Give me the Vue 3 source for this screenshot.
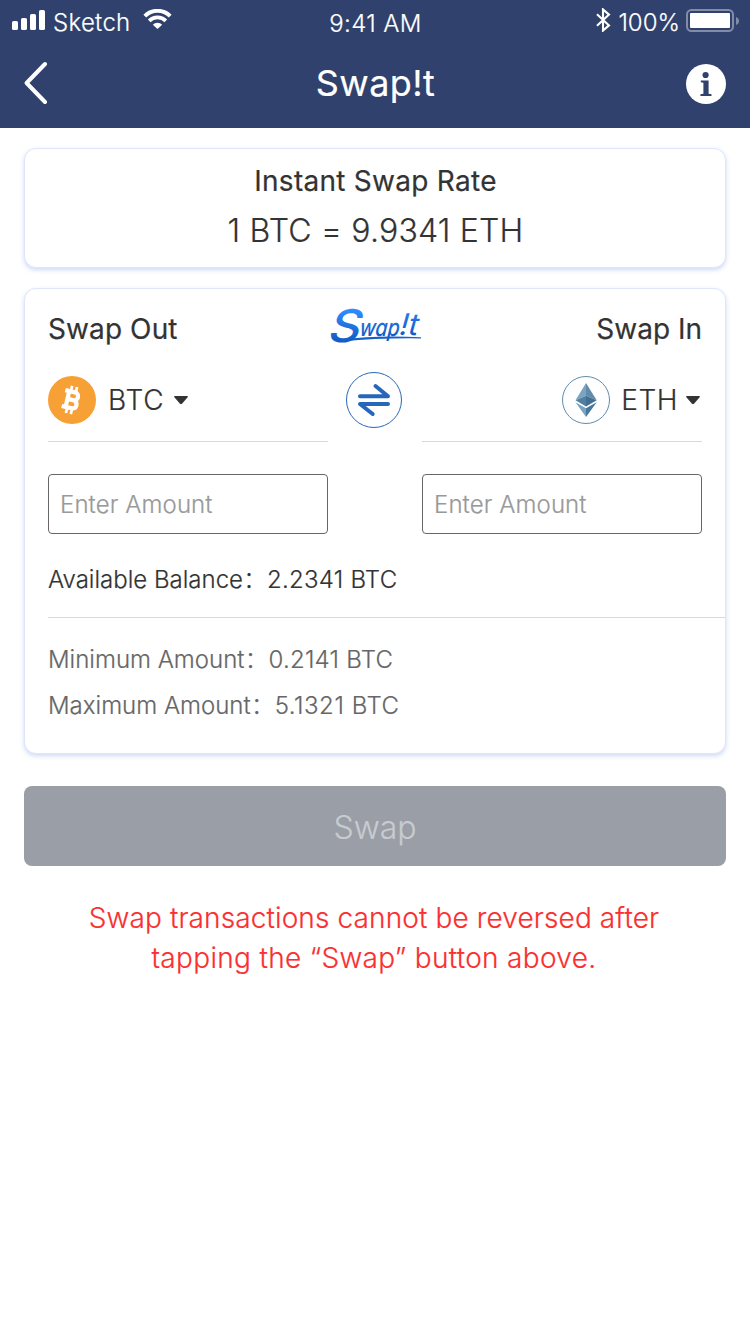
<script setup>
import { ref } from 'vue'

const outAmount = ref('')
const inAmount = ref('')
const limits = [
  { label: 'Minimum Amount', value: '0.2141 BTC', cls: 'min' },
  { label: 'Maximum Amount', value: '5.1321 BTC', cls: 'max' },
]
</script>

<template>
  <div class="screen">
    <header class="header">
      <div class="status">
        <div class="status-left">
          <svg class="signal" width="34" height="21" viewBox="0 0 34 21" fill="#fff">
            <rect x="0" y="11" width="6" height="9" rx="1.6" />
            <rect x="9" y="8" width="6" height="12" rx="1.6" />
            <rect x="18" y="4" width="6" height="16" rx="1.6" />
            <rect x="27" y="0" width="6" height="20" rx="1.6" />
          </svg>
          <span class="carrier">Sketch</span>
          <svg class="wifi" width="29" height="21" viewBox="0 0 30 22" fill="none" stroke="#fff">
            <path d="M1.7 7.4a18.8 18.8 0 0 1 26.6 0" stroke-width="4.2" />
            <path d="M6.3 12.4a12.2 12.2 0 0 1 17.4 0" stroke-width="3.9" />
            <path d="M15 21l-4.9-4.6a6.9 6.9 0 0 1 9.8 0z" fill="#fff" stroke="none" />
          </svg>
        </div>
        <span class="clock">9:41 AM</span>
        <div class="status-right">
          <svg class="bluetooth" width="15" height="24" viewBox="0 0 15 24" fill="none" stroke="#fff" stroke-width="2.1">
            <path d="M1 6.2l12 11.2-6 5.2V1.4l6 5.2L1 17.8" />
          </svg>
          <span class="percent">100%</span>
          <svg class="battery" width="53" height="24" viewBox="0 0 53 24">
            <rect x="1" y="1" width="46" height="21" rx="4.5" fill="none" stroke="#828ca6" stroke-width="2" />
            <rect x="4" y="4" width="40" height="15" rx="1" fill="#fff" />
            <path d="M50 8q3 1.2 3 4t-3 4z" fill="#828ca6" />
          </svg>
        </div>
      </div>
      <nav class="nav">
        <svg width="26" height="44" viewBox="0 0 26 44" fill="none" stroke="#fff" stroke-width="4" stroke-linecap="round" stroke-linejoin="round">
          <path d="M21 3L2.6 22 21 41" />
        </svg>
        <h1 class="title">Swap!t</h1>
        <svg class="info" width="40" height="40" viewBox="0 0 40 40">
          <circle cx="20" cy="20" r="20" fill="#fff" />
          <circle cx="19.6" cy="11" r="3.1" fill="#2f416c" />
          <path d="M14.8 16.5h7.8v13.3l2.9.5V32H14.4v-1.7l3-.5V18.7l-2.6-.5z" fill="#2f416c" />
        </svg>
      </nav>
    </header>

    <main class="content">
      <section class="card rate">
        <h2 class="rate-title">Instant Swap Rate</h2>
        <p class="rate-value">1 BTC = 9.9341 ETH</p>
      </section>

      <section class="card swap">
        <div class="columns">
          <div class="side">
            <h2 class="side-title">Swap Out</h2>
            <div class="coin">
              <svg width="48" height="48" viewBox="0 0 48 48">
                <circle cx="24" cy="24" r="24" fill="#f7a036" />
                <g transform="rotate(13 24 24)" fill="none" stroke="#fff">
                  <path d="M19.3 15.5v17M15.3 15.9h9.9a4 4 0 0 1 0 8h-5.5M19.5 23.9h6.4a4.2 4.2 0 0 1 0 8.3H15.3" stroke-width="4.2" />
                  <path d="M21 10.2v5M26 10.2v5M21 33v5M26 33v5" stroke-width="2.7" />
                </g>
              </svg>
              <span class="btc">BTC</span>
              <svg class="caret" width="14" height="9" viewBox="0 0 14 9"><path d="M1 0h12q1.6.3.4 1.6L8 7.7q-1 .9-2 0L.6 1.6Q-.6.3 1 0z" fill="#333" /></svg>
            </div>
            <input v-model="outAmount" class="amount" placeholder="Enter Amount" />
          </div>

          <div class="middle">
            <svg class="logo" width="94" height="46" viewBox="0 0 94 46">
              <defs>
                <linearGradient id="ink" x1="0" y1="-32" x2="0" y2="4" gradientUnits="userSpaceOnUse">
                  <stop offset="0" stop-color="#2f8dff" />
                  <stop offset="1" stop-color="#0d55bd" />
                </linearGradient>
              </defs>
              <text class="logo-s" transform="translate(0 33.5) skewX(-8)" textLength="32" lengthAdjust="spacingAndGlyphs">S</text>
              <text class="logo-w" transform="translate(31 28) skewX(-6)" textLength="40" lengthAdjust="spacingAndGlyphs">wap</text>
              <text class="logo-t" transform="translate(71 26.5) skewX(-6)" textLength="19" lengthAdjust="spacingAndGlyphs">!t</text>
              <path d="M14 31.5Q48 27 93 29.2V30.4Q52 29.8 14 33.5z" fill="#1560cb" />
            </svg>
            <svg class="exchange" width="56" height="56" viewBox="0 0 56 56" fill="none" stroke="#2767ba">
              <circle cx="28" cy="28" r="27.5" />
              <path d="M14 24.2h28L29.5 14M42 32H14l12.7 10" stroke-width="4" stroke-linecap="round" stroke-linejoin="round" />
            </svg>
          </div>

          <div class="side right">
            <h2 class="side-title">Swap In</h2>
            <div class="coin">
              <svg width="48" height="48" viewBox="0 0 48 48">
                <circle cx="24" cy="24" r="23.5" fill="#fff" stroke="#5f8cae" />
                <path d="M24 7L13.5 24.3 24 19.7z" fill="#7ba4c2" />
                <path d="M24 7l10.7 17.3L24 19.7z" fill="#628bab" />
                <path d="M24 19.7l-10.5 4.6L24 30.4z" fill="#517fa2" />
                <path d="M24 19.7l10.7 4.6L24 30.4z" fill="#426f94" />
                <path d="M13.5 26.3L24 41v-8.7z" fill="#7ba4c2" />
                <path d="M34.7 26.3L24 41v-8.7z" fill="#47779b" />
              </svg>
              <span class="eth">ETH</span>
              <svg class="caret" width="14" height="9" viewBox="0 0 14 9"><path d="M1 0h12q1.6.3.4 1.6L8 7.7q-1 .9-2 0L.6 1.6Q-.6.3 1 0z" fill="#333" /></svg>
            </div>
            <input v-model="inAmount" class="amount" placeholder="Enter Amount" />
          </div>
        </div>

        <p class="balance">Available Balance：<span>2.2341 BTC</span></p>
        <div class="limits">
          <p v-for="l in limits" :key="l.label">{{ l.label }}：<span :class="l.cls">{{ l.value }}</span></p>
        </div>
      </section>

      <button class="submit" disabled>Swap</button>
      <p class="warning">Swap transactions cannot be reversed after<br /><span>tapping the “Swap” button above.</span></p>
    </main>
  </div>
</template>

<style>
body { margin: 0; background: #fff; }
</style>

<style scoped>
* { box-sizing: border-box; margin: 0; }
svg { display: block; flex: none; }
.screen {
  width: 750px;
  height: 1334px;
  background: #fff;
  color: #333;
  font-family: Inter, "Noto Sans CJK SC", sans-serif;
  font-weight: 300;
  -webkit-text-stroke: 0.2px currentColor;
}
.header { height: 128px; background: #2f416c; color: #fff; }
.status {
  display: grid;
  grid-template-columns: 1fr auto 1fr;
  height: 40px;
  padding: 0 11px 0 12px;
  font-size: 24px;
  line-height: 46px;
}
.status-left, .status-right { display: flex; align-items: flex-start; }
.status-right { justify-content: flex-end; }
.signal { margin-top: 10px; }
.carrier { margin-left: 7px; letter-spacing: 0.3px; }
.wifi { margin: 9px 0 0 12px; }
.clock { line-height: 47px; letter-spacing: 0.4px; }
.bluetooth { margin-top: 8px; }
.percent { margin-left: 7px; letter-spacing: 0; }
.battery { margin: 9px 0 0 6px; }
.nav {
  display: flex;
  align-items: center;
  justify-content: space-between;
  height: 86px;
  padding: 0 24px;
}
.info { margin-top: 2px; }
.title { margin-left: 15px; font-size: 36px; font-weight: 400; line-height: 50px; letter-spacing: 0.4px; }
.content { padding: 20px 24px; }
.card {
  border: 1px solid #dfe6fb;
  border-radius: 12px;
  background: #fff;
  box-shadow: 0 2px 4px rgba(160, 182, 238, 0.5);
}
.rate { height: 120px; padding-top: 12px; text-align: center; }
.rate-title { padding-left: 1px; font-size: 28px; font-weight: 400; line-height: 40px; letter-spacing: 0.27px; }
.rate-value { padding-left: 1px; font-size: 32px; line-height: 60px; letter-spacing: 0.2px; }
.swap { height: 466px; margin-top: 20px; padding: 19px 0 0 23px; }
.columns { display: flex; justify-content: space-between; padding-right: 23px; }
.side { width: 280px; }
.side-title { height: 40px; font-size: 28px; font-weight: 400; line-height: 42px; letter-spacing: 0.1px; }
.right .side-title { letter-spacing: 0; text-align: right; }
.coin {
  display: flex;
  align-items: center;
  height: 94px;
  padding-top: 10px;
  border-bottom: 1px solid #d9d9dc;
  font-size: 28px;
}
.right .coin { justify-content: flex-end; }
.btc, .eth { padding-top: 1px; }
.btc { margin-left: 12px; letter-spacing: 0.9px; }
.eth { margin-left: 11px; letter-spacing: 0.5px; }
.caret { margin: 1px 0 0 9px; }
.right .caret { margin: 1px 2px 0 8px; }
.amount {
  display: block;
  width: 280px;
  height: 60px;
  margin-top: 32px;
  padding: 1px 11px 0;
  border: 1px solid #666;
  border-radius: 4px;
  background: #fff;
  font: inherit;
  font-size: 24px;
  letter-spacing: 0.1px;
  outline: none;
}
.amount::placeholder { color: #999; opacity: 1; }
.middle { display: flex; flex-direction: column; align-items: center; width: 94px; }
.logo { overflow: visible; font-family: Inter, sans-serif; font-style: italic; fill: url(#ink); -webkit-text-stroke: 0; }
.logo-s { font-size: 45px; font-weight: 500; }
.logo-w { font-size: 24px; font-weight: 500; }
.logo-t { font-size: 30px; font-weight: 400; }
.exchange { margin-top: 18px; margin-right: 2px; }
.balance {
  height: 84px;
  padding-top: 22px;
  border-bottom: 1px solid #d9d9dc;
  font-size: 24px;
  line-height: 48px;
}
.limits { padding-top: 19px; color: #666; font-size: 24px; line-height: 46px; }
.balance span { letter-spacing: 0.25px; }
.min { letter-spacing: 0.25px; }
.max { letter-spacing: 0.55px; }
.submit {
  display: block;
  width: 702px;
  height: 80px;
  margin-top: 32px;
  padding: 2px 0 0;
  border: 0;
  border-radius: 8px;
  background: #9a9ea6;
  color: #c8cbcf;
  font: inherit;
  font-size: 32px;
}
.warning { margin-top: 32px; padding-right: 2px; color: #fa2f2f; font-size: 28px; line-height: 40px; letter-spacing: 0.12px; text-align: center; }
.warning span { letter-spacing: 0.32px; }
</style>
